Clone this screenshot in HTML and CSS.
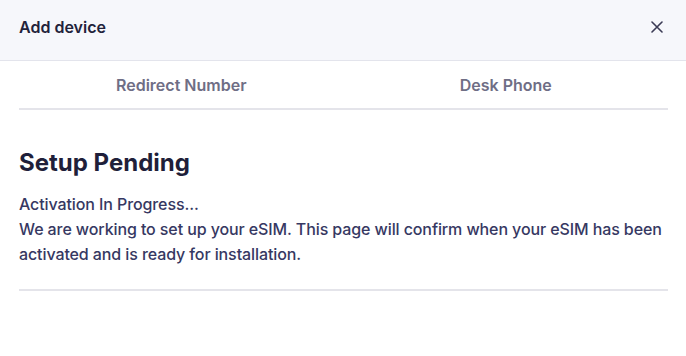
FILE: index.html
```html
<!DOCTYPE html>
<html>
<head>
  <title>Add device</title>
  <link rel="stylesheet" href="styles.css">
</head>
<body>
  <div class="modal">
    <div class="modal-header">
      <span class="modal-title">Add device</span>
      <button class="close" aria-label="Close">
        <svg width="12" height="12" viewBox="0 0 12 12">
          <path d="M1 1L11 11M11 1L1 11" stroke="#3b3b55" stroke-width="1.6" stroke-linecap="round"/>
        </svg>
      </button>
    </div>
    <div class="modal-body">
      <div class="tabs">
        <div class="tab">Redirect Number</div>
        <div class="tab">Desk Phone</div>
      </div>
      <h2 class="status-title">Setup Pending</h2>
      <div class="status-text">
        <p>Activation In Progress...</p>
        <p>We are working to set up your eSIM. This page will confirm when your eSIM has been activated and is ready for installation.</p>
      </div>
      <div class="divider"></div>
    </div>
  </div>
</body>
</html>
```
FILE: styles.css
```css
body {
  margin: 0;
  font-family: Inter, "Noto Sans", sans-serif;
  background-color: #fff;
}

.modal {
  width: 686px;
  height: 356px;
  background-color: #fff;
}

.modal-header {
  display: flex;
  justify-content: space-between;
  align-items: center;
  height: 54px;
  padding: 0 19px 6px;
  background-color: #f6f7fb;
  border-bottom: 1px solid #e3e4ec;
}

.modal-title {
  font-size: 16px;
  font-weight: 600;
  color: #22223a;
}

.close {
  display: flex;
  padding: 0;
  margin-right: 4px;
  border: none;
  background: none;
  cursor: pointer;
}

.modal-body {
  padding: 0 18px 0 19px;
}

.tabs {
  display: grid;
  grid-template-columns: 1fr 1fr;
  border-bottom: 2px solid #e4e4ea;
}

.tab {
  height: 47px;
  display: flex;
  align-items: center;
  justify-content: center;
  font-size: 16px;
  font-weight: 600;
  color: #6f6e85;
}

.status-title {
  margin: 38px 0 0;
  font-size: 24px;
  font-weight: 700;
  color: #1f1f3a;
  line-height: 30px;
}

.status-text {
  margin-top: 14px;
  font-size: 16px;
  font-weight: 500;
  color: #363862;
  line-height: 25px;
  letter-spacing: -0.1px;
}

.status-text p {
  margin: 0;
}

.divider {
  margin-top: 22px;
  border-top: 2px solid #e4e4ea;
}
```
